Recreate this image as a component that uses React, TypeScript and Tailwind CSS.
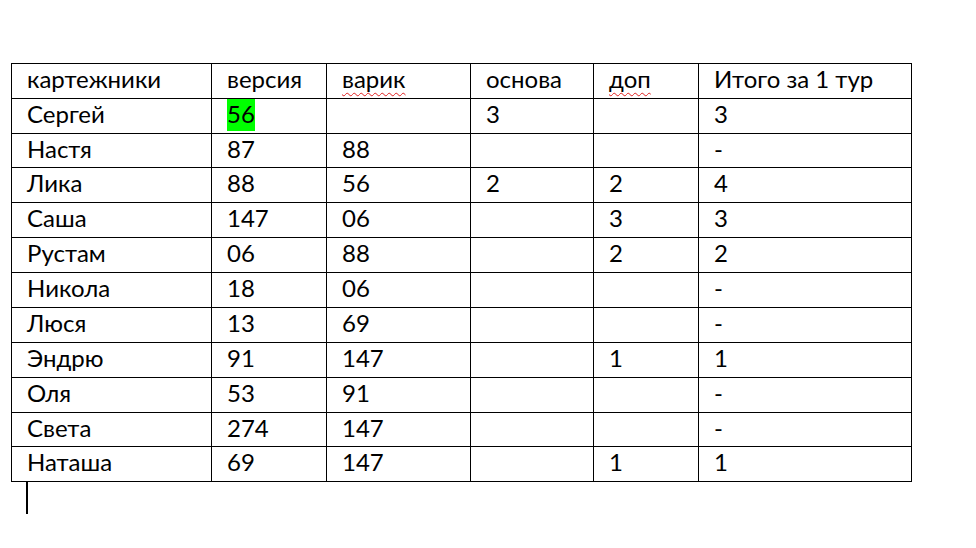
const headers = ["картежники", "версия", "варик", "основа", "доп", "Итого за 1 тур"];

// spell-check squiggle under these headers
const misspelled = ["варик", "доп"];

const rows: string[][] = [
  ["Сергей", "56", "", "3", "", "3"],
  ["Настя", "87", "88", "", "", "-"],
  ["Лика", "88", "56", "2", "2", "4"],
  ["Саша", "147", "06", "", "3", "3"],
  ["Рустам", "06", "88", "", "2", "2"],
  ["Никола", "18", "06", "", "", "-"],
  ["Люся", "13", "69", "", "", "-"],
  ["Эндрю", "91", "147", "", "1", "1"],
  ["Оля", "53", "91", "", "", "-"],
  ["Света", "274", "147", "", "", "-"],
  ["Наташа", "69", "147", "", "1", "1"],
];

const Cell = ({ text, highlight = false, wavy = false }: { text: string; highlight?: boolean; wavy?: boolean }) => {
  return (
    <div className="flex items-start bg-white pl-[15px]">
      <span
        className={`leading-[30px] pb-[2px] ${highlight ? "bg-[#00ff00]" : ""} ${
          wavy ? "underline decoration-wavy decoration-[#e02020] decoration-1 underline-offset-[4px]" : ""
        }`}
      >
        {text}
      </span>
    </div>
  );
};

export default function App() {
  return (
    <div
      className="w-[976px] h-[548px] bg-white text-black text-[24px] pt-[63px] pl-[11px]"
      style={{ fontFamily: "Lato, 'Open Sans', sans-serif" }}
    >
      {/* TABLE */}
      <div className="grid w-max grid-cols-[199px_114px_143px_122px_104px_212px] grid-rows-[34px_34px_33px_34px_34px_34px_34px_34px_34px_34px_33px_34px] gap-px p-px bg-black">
        {headers.map((h) => (
          <Cell key={h} text={h} wavy={misspelled.includes(h)} />
        ))}
        {rows.map((r, i) =>
          r.map((c, j) => <Cell key={`${i}-${j}`} text={c} highlight={i === 0 && j === 1} />)
        )}
      </div>

      {/* text cursor */}
      <div className="ml-[15px] w-[2px] h-[32px] bg-black" />
    </div>
  );
}
